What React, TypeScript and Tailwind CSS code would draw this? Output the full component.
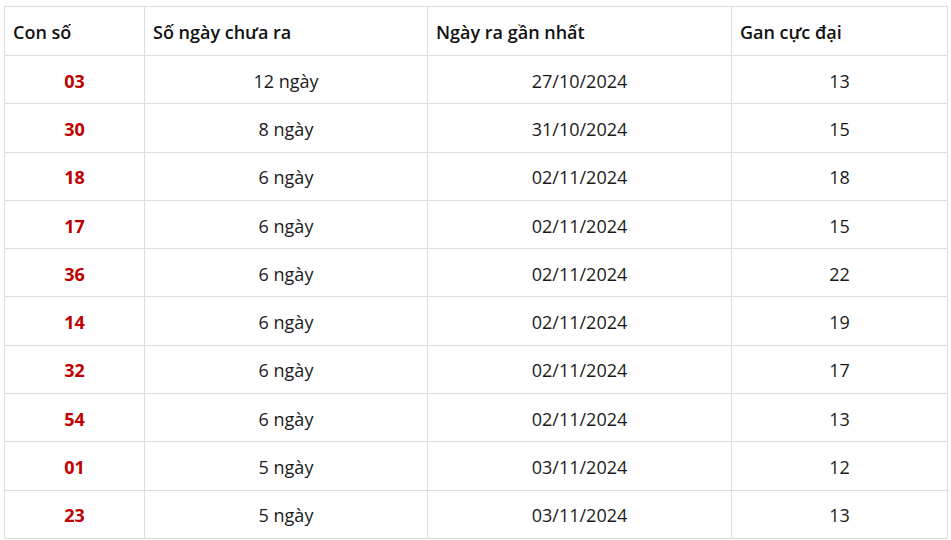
const rows = [
  { so: '03', ngay: '12 ngày', gan: '27/10/2024', max: '13' },
  { so: '30', ngay: '8 ngày', gan: '31/10/2024', max: '15' },
  { so: '18', ngay: '6 ngày', gan: '02/11/2024', max: '18' },
  { so: '17', ngay: '6 ngày', gan: '02/11/2024', max: '15' },
  { so: '36', ngay: '6 ngày', gan: '02/11/2024', max: '22' },
  { so: '14', ngay: '6 ngày', gan: '02/11/2024', max: '19' },
  { so: '32', ngay: '6 ngày', gan: '02/11/2024', max: '17' },
  { so: '54', ngay: '6 ngày', gan: '02/11/2024', max: '13' },
  { so: '01', ngay: '5 ngày', gan: '03/11/2024', max: '12' },
  { so: '23', ngay: '5 ngày', gan: '03/11/2024', max: '13' },
];

export default function App() {
  return (
    <div className="bg-white pt-[6px] pl-[4px] font-['Open_Sans',sans-serif] text-[18px] text-[#1a1a1a]">
      <table className="w-[943px] table-fixed border-collapse">
        <colgroup>
          <col className="w-[140px]" />
          <col className="w-[283px]" />
          <col className="w-[304px]" />
          <col className="w-[216px]" />
        </colgroup>
        <thead>
          <tr className="h-[49px]">
            {['Con số', 'Số ngày chưa ra', 'Ngày ra gần nhất', 'Gan cực đại'].map((h) => (
              <th key={h} className="border border-[#dcdcdc] px-2 pt-[2px] text-left font-semibold text-[#111]">
                {h}
              </th>
            ))}
          </tr>
        </thead>
        <tbody>
          {rows.map((r) => (
            <tr key={r.so} className="h-[48.3px] text-center">
              <td className="border border-[#dcdcdc] pt-[3px] font-bold text-[#c00000]">{r.so}</td>
              <td className="border border-[#dcdcdc] pt-[3px]">{r.ngay}</td>
              <td className="border border-[#dcdcdc] pt-[3px]">{r.gan}</td>
              <td className="border border-[#dcdcdc] pt-[3px]">{r.max}</td>
            </tr>
          ))}
        </tbody>
      </table>
    </div>
  );
}
